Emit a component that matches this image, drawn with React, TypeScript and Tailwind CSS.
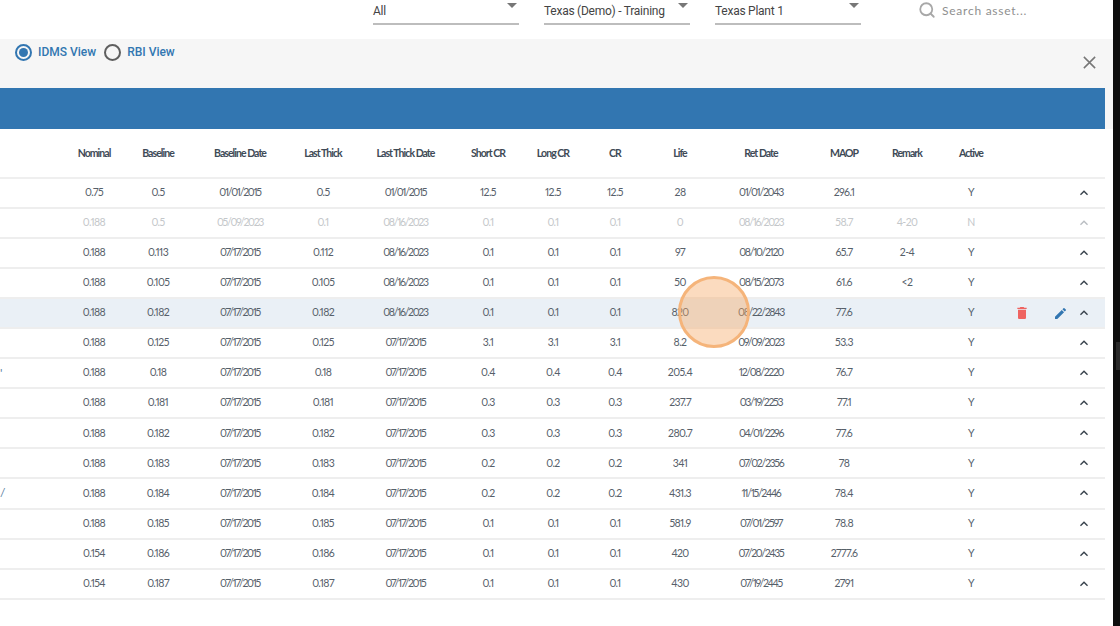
import React from "react";
import { Search } from "lucide-react";

const cols = "grid grid-cols-[62px_64px_64px_100px_66px_99px_66px_64px_60px_70px_92px_74px_52px_76px_96px]";
const heads = ["", "Nominal", "Baseline", "Baseline Date", "Last Thick", "Last Thick Date", "Short CR", "Long CR", "CR", "Life", "Ret Date", "MAOP", "Remark", "Active"];
const rows: string[][] = [
  ["", "0.75", "0.5", "01/01/2015", "0.5", "01/01/2015", "12.5", "12.5", "12.5", "28", "01/01/2043", "296.1", "", "Y"],
  ["", "0.188", "0.5", "05/09/2023", "0.1", "08/16/2023", "0.1", "0.1", "0.1", "0", "08/16/2023", "58.7", "4-20", "N"],
  ["", "0.188", "0.113", "07/17/2015", "0.112", "08/16/2023", "0.1", "0.1", "0.1", "97", "08/10/2120", "65.7", "2-4", "Y"],
  ["", "0.188", "0.105", "07/17/2015", "0.105", "08/16/2023", "0.1", "0.1", "0.1", "50", "08/15/2073", "61.6", "<2", "Y"],
  ["", "0.188", "0.182", "07/17/2015", "0.182", "08/16/2023", "0.1", "0.1", "0.1", "820", "08/22/2843", "77.6", "", "Y"],
  ["", "0.188", "0.125", "07/17/2015", "0.125", "07/17/2015", "3.1", "3.1", "3.1", "8.2", "09/09/2023", "53.3", "", "Y"],
  ["'", "0.188", "0.18", "07/17/2015", "0.18", "07/17/2015", "0.4", "0.4", "0.4", "205.4", "12/08/2220", "76.7", "", "Y"],
  ["", "0.188", "0.181", "07/17/2015", "0.181", "07/17/2015", "0.3", "0.3", "0.3", "237.7", "03/19/2253", "77.1", "", "Y"],
  ["", "0.188", "0.182", "07/17/2015", "0.182", "07/17/2015", "0.3", "0.3", "0.3", "280.7", "04/01/2296", "77.6", "", "Y"],
  ["", "0.188", "0.183", "07/17/2015", "0.183", "07/17/2015", "0.2", "0.2", "0.2", "341", "07/02/2356", "78", "", "Y"],
  ["/", "0.188", "0.184", "07/17/2015", "0.184", "07/17/2015", "0.2", "0.2", "0.2", "431.3", "11/15/2446", "78.4", "", "Y"],
  ["", "0.188", "0.185", "07/17/2015", "0.185", "07/17/2015", "0.1", "0.1", "0.1", "581.9", "07/01/2597", "78.8", "", "Y"],
  ["", "0.154", "0.186", "07/17/2015", "0.186", "07/17/2015", "0.1", "0.1", "0.1", "420", "07/20/2435", "2777.6", "", "Y"],
  ["", "0.154", "0.187", "07/17/2015", "0.187", "07/17/2015", "0.1", "0.1", "0.1", "430", "07/19/2445", "2791", "", "Y"],
];

function Dropdown({ label, w }: { label: string; w: string }) {
  return (
    <div className={`${w} h-[25px] border-b-2 border-[#bdbdbd] flex justify-between pl-0 pr-[2px] relative`}>
      <span className="text-[12px] tracking-[-0.25px] leading-[22px] text-[#444] font-['Roboto',sans-serif]">{label}</span>
      <span className="mt-[3px] w-0 h-0 border-l-[5px] border-r-[5px] border-t-[5px] border-l-transparent border-r-transparent border-t-[#777]" />
    </div>
  );
}

function Chevron({ muted }: { muted: boolean }) {
  return (
    <svg viewBox="0 0 24 24" className="w-[16px] h-[16px]" fill={muted ? "#b9bdc2" : "#37414b"}>
      <path d="M12 8l-6 6 1.41 1.41L12 10.83l4.59 4.58L18 14z" />
    </svg>
  );
}

export default function App() {
  return (
    <div className="flex h-[626px] w-[1120px] overflow-hidden bg-white font-['Lato',sans-serif]">
      <div className="w-[1113px] flex flex-col">
        <div className="h-[39px] flex pl-[373px] gap-[25px] shrink-0">
          <Dropdown label="All" w="w-[146px]" />
          <Dropdown label="Texas (Demo) - Training" w="w-[146px]" />
          <Dropdown label="Texas Plant 1" w="w-[146px]" />
          <div className="flex items-start ml-[32px] pt-[1px] gap-[6px]">
            <Search size={18} strokeWidth={2.4} className="text-[#a8a8a8]" />
            <span className="text-[12px] leading-[20px] tracking-[0.75px] text-[#8f8f8f]">Search asset...</span>
          </div>
        </div>
        <div className="h-[49px] bg-[#f6f6f6] flex justify-between shrink-0 pl-[15px] pr-[17px]">
          <div className="flex items-start pt-[5px]">
            <span className="w-[17px] h-[17px] rounded-full border-2 border-[#3276b1] flex items-center justify-center">
              <span className="w-[9px] h-[9px] rounded-full bg-[#3276b1]" />
            </span>
            <span className="ml-[6px] text-[12px] leading-[17px] font-medium text-[#3276b1] font-['Roboto',sans-serif]">IDMS View</span>
            <span className="ml-[8px] w-[17px] h-[17px] rounded-full border-2 border-[#5f5f5f]" />
            <span className="ml-[6px] text-[12px] leading-[17px] font-medium text-[#3276b1] font-['Roboto',sans-serif]">RBI View</span>
          </div>
          <svg viewBox="0 0 12 12" className="w-[13px] h-[13px] mt-[17px]" stroke="#777" strokeWidth="1.4" fill="none">
            <path d="M0.8 0.8L11.2 11.2M11.2 0.8L0.8 11.2" />
          </svg>
        </div>
        <div className="flex-1 bg-white relative">
          <div className="bg-[#f6f6f6] pr-[8px]">
            <div className="h-[41px] bg-[#3276b1]" />
          </div>
          <div className="pr-[8px]">
            <div className={`${cols} h-[50px] pt-[2px] bg-white items-center text-center text-[10.5px] font-bold tracking-[-0.95px] text-[#3e4a56] border-b-2 border-[#efefef]`}>
              {heads.map((h, i) => <div key={i}>{h}</div>)}
            </div>
            {rows.map((r, i) => {
              const muted = i === 1;
              const active = i === 4;
              return (
                <div
                  key={i}
                  className={`${cols} h-[30.05px] items-center text-center text-[10.5px] proportional-nums tracking-[-0.6px] border-b-2 border-[#eeeeee] ${active ? "bg-[#eaf0f6]" : "bg-white"} ${muted ? "text-[#c4c7ca]" : "text-[#56606a]"}`}
                >
                  {r.map((c, j) => (
                    <div key={j} className={j === 0 ? "text-left text-[#5b7f9f] text-[12px]" : c.includes("/") ? "tracking-[-1.3px]" : ""}>{c}</div>
                  ))}
                  <div className="flex items-center pl-[8px]">
                    <span className="w-[10px] h-[12px] flex items-center justify-center">
                      {active && (
                        <svg viewBox="5 3 14 18" className="w-[10px] h-[12px]" fill="#ef6461">
                          <path d="M6 19c0 1.1.9 2 2 2h8c1.1 0 2-.9 2-2V7H6v12zM19 4h-3.5l-1-1h-5l-1 1H5v2h14V4z" />
                        </svg>
                      )}
                    </span>
                    <span className="ml-[28px] w-[11px] h-[11px] flex items-center justify-center">
                      {active && (
                        <svg viewBox="3 3 18 18" className="w-[11px] h-[11px]" fill="#3276b1">
                          <path d="M3 17.25V21h3.75L17.81 9.94l-3.75-3.75L3 17.25zM20.71 7.04c.39-.39.39-1.02 0-1.41l-2.34-2.34c-.39-.39-1.02-.39-1.41 0l-1.83 1.83 3.75 3.75 1.83-1.83z" />
                        </svg>
                      )}
                    </span>
                    <span className="ml-[10px]">
                      <Chevron muted={muted} />
                    </span>
                  </div>
                </div>
              );
            })}
          </div>
          <div className="absolute left-[678px] top-[188px] w-[72px] h-[72px] rounded-full bg-[#f4a460]/40 border-[3px] border-[#f5b47a]" />
        </div>
      </div>
      <div className="w-[7px] bg-[#0e0e0e] flex flex-col justify-start">
        <div className="mt-[342px] ml-[3px] w-[4px] h-[28px] bg-[#2a2a2a]" />
      </div>
    </div>
  );
}
